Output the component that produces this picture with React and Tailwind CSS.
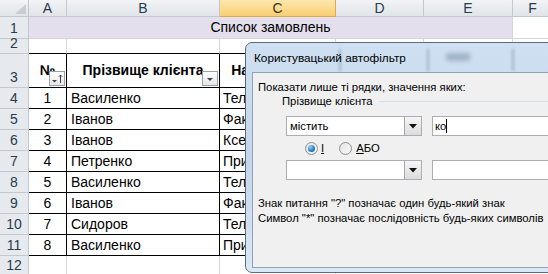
import React from "react";

const rows = [
  [1, "Василенко", "Телевізор"],
  [2, "Іванов", "Факс"],
  [3, "Іванов", "Ксерокс"],
  [4, "Петренко", "Принтер"],
  [5, "Василенко", "Телевізор"],
  [6, "Іванов", "Факс"],
  [7, "Сидоров", "Телевізор"],
  [8, "Василенко", "Принтер"],
];

function RowHead({ n, h }) {
  return (
    <div
      className={`w-[29px] shrink-0 flex justify-center items-end pb-px bg-[#e6e9ed] border-r border-b border-[#c3c8ce] text-[#2a3b4f] leading-[18px] ${h}`}
    >
      {n}
    </div>
  );
}

function ColHead({ label, w, active }) {
  return (
    <div
      className={`${w} shrink-0 h-full flex justify-center items-center border-r border-b ${
        active
          ? "bg-gradient-to-b from-[#fde7ad] to-[#f8cf72] border-[#e3a84d] text-[#3a3020]"
          : "bg-gradient-to-b from-[#f2f4f6] to-[#e0e4e8] border-[#c3c8ce] text-[#2a3b4f]"
      }`}
    >
      {label}
    </div>
  );
}

function FilterBtn({ sorted }) {
  return (
    <div className="w-[16px] h-[15px] border border-[#9aa0a6] bg-gradient-to-b from-[#ffffff] to-[#e4e6e8] flex items-center justify-center">
      <svg width="14" height="13" viewBox="0 0 14 13">
        {sorted ? (
          <>
            <path d="M2 8h5l-2.5 2.5z" fill="#444" />
            <path d="M10.5 3v8M8.8 4.8l1.7-1.8 1.7 1.8" stroke="#444" strokeWidth="1" fill="none" />
          </>
        ) : (
          <path d="M4 6h6l-3 3z" fill="#444" />
        )}
      </svg>
    </div>
  );
}

function DropBtn() {
  return (
    <div className="w-[17px] h-full border-l border-[#a7a7a7] bg-gradient-to-b from-[#f6f6f6] to-[#dcdcdc] flex items-center justify-center">
      <svg width="8" height="5" viewBox="0 0 8 5">
        <path d="M0 0h8l-4 4.5z" fill="#111" />
      </svg>
    </div>
  );
}

function Radio({ on }) {
  return (
    <div className="w-[13px] h-[13px] rounded-full border border-[#8e8f8f] bg-gradient-to-br from-[#e3e3e3] to-[#fbfbfb] flex items-center justify-center">
      {on && (
        <div className="w-[7px] h-[7px] rounded-full bg-[radial-gradient(circle_at_35%_30%,#8fd3ff,#2a7fc4_55%,#0d4f8b)]" />
      )}
    </div>
  );
}

export default function App() {
  return (
    <div className="relative w-[548px] h-[274px] overflow-hidden bg-white font-['Liberation_Sans',sans-serif] text-[14px] text-black">
      {/* column headers */}
      <div className="flex h-[17px]">
        <div className="w-[29px] shrink-0 h-full bg-gradient-to-b from-[#f2f4f6] to-[#e0e4e8] border-r border-b border-[#c3c8ce] flex items-end justify-end p-[2px]">
          <svg width="11" height="10" viewBox="0 0 11 10">
            <path d="M11 0v10H0z" fill="#c9cdd2" />
          </svg>
        </div>
        <ColHead label="A" w="w-[38px]" />
        <ColHead label="B" w="w-[153px]" />
        <ColHead label="C" w="w-[116px]" active />
        <ColHead label="D" w="w-[88px]" />
        <ColHead label="E" w="w-[89px]" />
        <ColHead label="F" w="w-[40px]" />
      </div>

      {/* row 1 */}
      <div className="flex h-[22px]">
        <RowHead n="1" h="h-full" />
        <div className="w-[484px] shrink-0 h-full bg-[#e4dfec] border-r border-b border-[#d6d6d6] flex items-center justify-center">
          Список замовлень
        </div>
        <div className="w-[40px] shrink-0 h-full border-b border-[#d6d6d6]" />
      </div>

      {/* row 2 */}
      <div className="flex h-[15px]">
        <RowHead n="2" h="h-full" />
        <div className="w-[38px] shrink-0 h-full border-r border-b border-r-[#d6d6d6] border-b-black" />
        <div className="w-[153px] shrink-0 h-full border-r border-b border-r-[#d6d6d6] border-b-black" />
        <div className="w-[116px] shrink-0 h-full border-r border-b border-r-[#d6d6d6] border-b-black" />
        <div className="w-[88px] shrink-0 h-full border-r border-b border-[#d6d6d6]" />
        <div className="w-[89px] shrink-0 h-full border-r border-b border-[#d6d6d6]" />
        <div className="w-[40px] shrink-0 h-full border-b border-[#d6d6d6]" />
      </div>

      {/* row 3 headers */}
      <div className="flex h-[34px] font-bold">
        <RowHead n="3" h="h-full font-normal" />
        <div className="relative w-[38px] shrink-0 h-full border-r border-b border-black flex items-center justify-center">
          №
          <div className="absolute right-[1px] bottom-[1px]">
            <FilterBtn sorted />
          </div>
        </div>
        <div className="relative w-[153px] shrink-0 h-full border-r border-b border-black flex items-center justify-center">
          Прізвище клієнта
          <div className="absolute right-[1px] bottom-[1px]">
            <FilterBtn />
          </div>
        </div>
        <div className="w-[116px] shrink-0 h-full border-r border-b border-black flex items-center justify-center">
          Назва товару
        </div>
        <div className="w-[88px] shrink-0 h-full border-r border-b border-[#d6d6d6]" />
        <div className="w-[89px] shrink-0 h-full border-r border-b border-[#d6d6d6]" />
        <div className="w-[40px] shrink-0 h-full border-b border-[#d6d6d6]" />
      </div>

      {/* data rows */}
      {rows.map(([n, name, item], i) => (
        <div key={n} className="flex h-[21px]">
          <RowHead n={i + 4} h="h-full" />
          <div className="w-[38px] shrink-0 h-full border-r border-b border-black flex items-center justify-center">
            {n}
          </div>
          <div className="w-[153px] shrink-0 h-full border-r border-b border-black flex items-center pl-[4px]">
            {name}
          </div>
          <div className="w-[116px] shrink-0 h-full border-r border-b border-black flex items-center pl-[3px] overflow-hidden whitespace-nowrap">
            {item}
          </div>
          <div className="w-[88px] shrink-0 h-full border-r border-b border-[#d6d6d6]" />
          <div className="w-[89px] shrink-0 h-full border-r border-b border-[#d6d6d6]" />
          <div className="w-[40px] shrink-0 h-full border-b border-[#d6d6d6]" />
        </div>
      ))}

      {/* row 12 */}
      <div className="flex h-[20px]">
        <RowHead n="12" h="h-full" />
        <div className="w-[38px] shrink-0 h-full border-r border-[#d6d6d6]" />
        <div className="w-[153px] shrink-0 h-full border-r border-[#d6d6d6]" />
        <div className="w-[116px] shrink-0 h-full border-r border-[#d6d6d6]" />
      </div>

      {/* dialog window */}
      <div className="absolute left-[245px] top-[42px] w-[330px] h-[231px] rounded-tl-[7px] rounded-bl-[7px] border border-[#5b6b7c] bg-gradient-to-b from-[#cfe0f2] via-[#c3d6ec] to-[#dbe7f4] text-[11.3px]">
        {/* blurred glass */}
        <div className="absolute left-[93px] top-[6px] w-[2px] h-[22px] bg-[#9fb1c4] blur-[1.5px]" />
        <div className="absolute left-[181px] top-[6px] w-[2px] h-[22px] bg-[#9fb1c4] blur-[1.5px]" />
        <div className="absolute left-[200px] top-[10px] w-[24px] h-[8px] bg-[#8fa2b6] blur-[2px] opacity-70" />
        <div className="absolute left-[266px] top-[6px] w-[2px] h-[22px] bg-[#9fb1c4] blur-[1.5px]" />
        <div className="absolute left-[8px] top-[7px] leading-[16px] text-[11.8px] text-black">
          Користувацький автофільтр
        </div>

        {/* client area */}
        <div className="absolute left-[6px] top-[29px] right-0 bottom-[4px] border border-[#8ea3b9] bg-[#f0f0f0] pl-[5px] pt-[7px] leading-[14px]">
          <div>Показати лише ті рядки, значення яких:</div>
          <div className="flex items-center gap-[6px] pl-[24px]">
            <span>Прізвище клієнта</span>
            <div className="flex-1 h-px bg-[#d5dfe5]" />
          </div>

          <div className="flex gap-[10px] pl-[28px] mt-[8px]">
            <div className="w-[136px] h-[20px] border border-[#abadb3] bg-white flex">
              <div className="flex-1 pl-[3px] flex items-center">містить</div>
              <DropBtn />
            </div>
            <div className="flex-1 h-[20px] border border-r-0 border-[#abadb3] bg-white flex items-center pl-[2px]">
              ко
              <div className="w-px h-[14px] bg-black" />
            </div>
          </div>

          <div className="flex items-center h-[14px] mt-[5px] pl-[47px]">
            <Radio on />
            <span className="ml-[3px] underline">І</span>
            <div className="ml-[15px]">
              <Radio />
            </div>
            <span className="ml-[4px]">
              <span className="underline">А</span>БО
            </span>
          </div>

          <div className="flex gap-[10px] pl-[28px] mt-[5px]">
            <div className="w-[136px] h-[20px] border border-[#abadb3] bg-white flex">
              <div className="flex-1" />
              <DropBtn />
            </div>
            <div className="flex-1 h-[20px] border border-r-0 border-[#abadb3] bg-white" />
          </div>

          <div className="mt-[16px]">Знак питання "?" позначає один будь-який знак</div>
          <div className="mt-px">Символ "*" позначає послідовність будь-яких символів</div>
        </div>
      </div>
    </div>
  );
}
